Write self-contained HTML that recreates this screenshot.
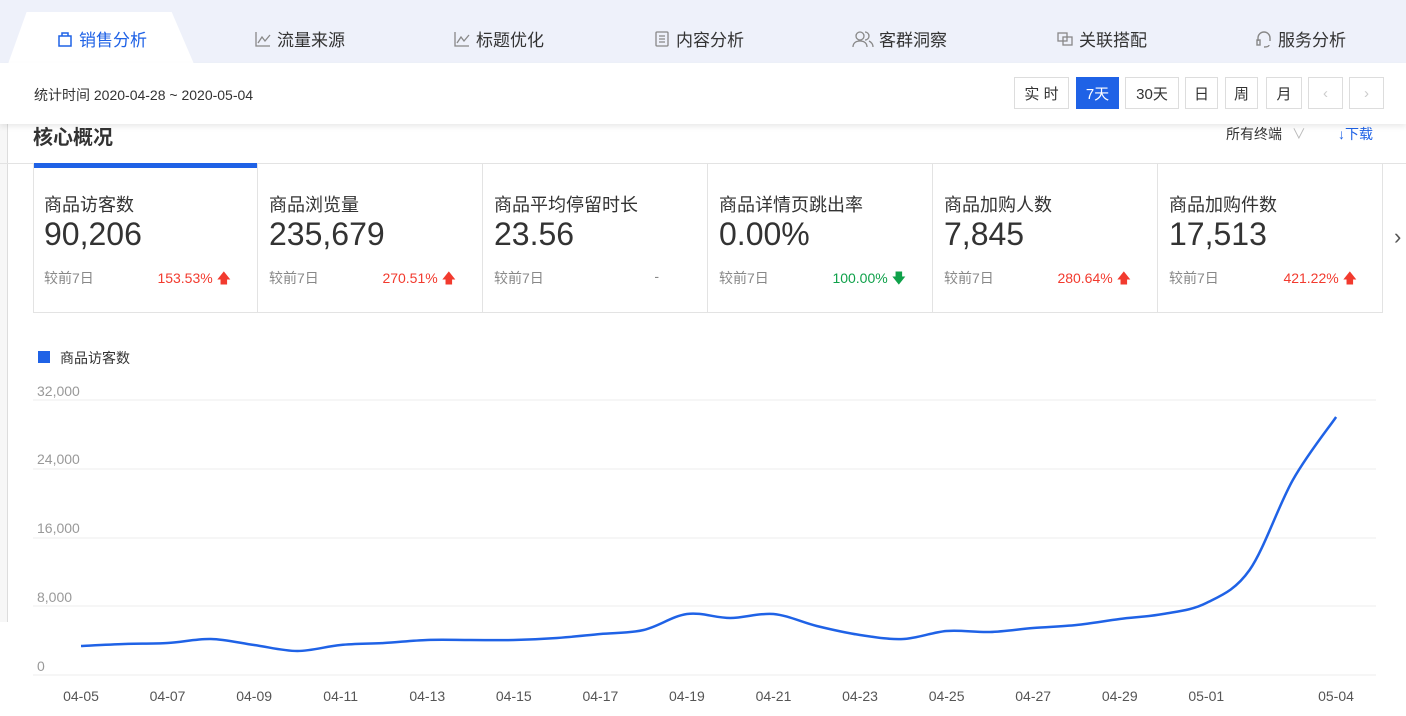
<!DOCTYPE html>
<html><head><meta charset="utf-8"><style>
*{margin:0;padding:0;box-sizing:border-box}
body{width:1406px;height:716px;overflow:hidden;background:#fff;font-family:"Liberation Sans","Noto Sans CJK SC",sans-serif;color:#333;position:relative}
.tabs{position:absolute;left:0;top:0;width:1406px;height:63px;background:#eef1fa}
.tab{position:absolute;top:26px;font-size:17px;color:#333;display:flex;align-items:center;gap:5px}
.tab svg{width:18px;height:18px}
.act{position:absolute;left:8px;top:12px;width:186px;height:52px;background:#fff;clip-path:polygon(10% 0,88% 0,100% 100%,0 100%)}
.hdr{position:absolute;left:0;top:63px;width:1406px;height:61px;background:#fff;box-shadow:0 3px 5px rgba(0,0,0,.08);z-index:2}
.btn{position:absolute;top:77px;height:32px;border:1px solid #ddd;font-size:15px;display:flex;align-items:center;justify-content:center;color:#333;background:#fff;z-index:3}
.card{position:absolute;top:163px;width:225px;height:150px;border-right:1px solid #e3e3e3}
.card .t{position:absolute;left:11px;top:28px;font-size:18px}
.card .v{position:absolute;left:11px;top:53px;font-size:32px;color:#333}
.card .c{position:absolute;left:11px;top:105px;font-size:14px;color:#888}
.card .p{position:absolute;right:26px;top:105px;font-size:14px;color:#f23a2e}
</style></head><body>
<div style="position:absolute;left:0;top:0;width:8px;height:622px;border-right:1px solid #ddd;background:#f7f7f7"></div>
<div class="tabs">
<div class="act"></div>
<div class="tab" style="left:56px;color:#1f62e6"><svg viewBox="0 0 18 18" fill="none" stroke="#1f62e6" stroke-width="1.5"><rect x="3" y="6" width="12" height="10"/><path d="M6 6V3h6v3"/></svg>销售分析</div>
<div class="tab" style="left:254px"><svg viewBox="0 0 18 18" fill="none" stroke="#888" stroke-width="1.3"><path d="M2 2v14h14M4 13l4-6 3 4 5-6"/></svg>流量来源</div>
<div class="tab" style="left:453px"><svg viewBox="0 0 18 18" fill="none" stroke="#888" stroke-width="1.3"><path d="M2 2v14h14M4 13l4-6 3 4 5-6"/></svg>标题优化</div>
<div class="tab" style="left:653px"><svg viewBox="0 0 18 18" fill="none" stroke="#888" stroke-width="1.3"><rect x="3" y="2" width="12" height="14" rx="1"/><path d="M6 6h6M6 9h6M6 12h6"/></svg>内容分析</div>
<div class="tab" style="left:852px"><svg viewBox="0 0 22 18" style="width:22px" fill="none" stroke="#888" stroke-width="1.3"><circle cx="8" cy="6" r="4"/><path d="M1 17c0-4 3-6 7-6s7 2 7 6M13 2a4 4 0 010 8M17 11c2 1 4 3 4 6"/></svg>客群洞察</div>
<div class="tab" style="left:1056px"><svg viewBox="0 0 18 18" fill="none" stroke="#888" stroke-width="1.3"><rect x="2" y="3" width="9" height="8"/><rect x="7" y="7" width="9" height="8"/></svg>关联搭配</div>
<div class="tab" style="left:1255px"><svg viewBox="0 0 18 18" fill="none" stroke="#888" stroke-width="1.4"><path d="M3 11V8a6 6 0 0112 0v3"/><rect x="2" y="10" width="3" height="5"/><path d="M14 15c0 2-3 2-5 2"/></svg>服务分析</div>
</div>
<div class="hdr"><div style="position:absolute;left:34px;top:22px;font-size:14px;color:#333">统计时间 2020-04-28 ~ 2020-05-04</div></div>
<div class="btn" style="left:1014px;width:55px">实 时</div>
<div class="btn" style="left:1076px;width:43px;background:#1f62e6;color:#fff;border-color:#1f62e6">7天</div>
<div class="btn" style="left:1125px;width:54px">30天</div>
<div class="btn" style="left:1185px;width:33px">日</div>
<div class="btn" style="left:1225px;width:33px">周</div>
<div class="btn" style="left:1266px;width:36px">月</div>
<div class="btn" style="left:1308px;width:35px;color:#ccc">‹</div>
<div class="btn" style="left:1349px;width:35px;color:#ccc">›</div>
<div style="position:absolute;left:33px;top:121px;font-size:20px;font-weight:bold;color:#333">核心概况</div>
<div style="position:absolute;left:1226px;top:124px;font-size:14px;color:#333">所有终端 <span style="color:#bbb;margin-left:6px">∨</span></div>
<div style="position:absolute;left:1338px;top:124px;font-size:14px;color:#1f62e6">↓下载</div>
<div style="position:absolute;left:0;top:163px;width:1406px;border-top:1px solid #e3e3e3"></div>
<div style="position:absolute;left:33px;top:163px;width:1350px;height:150px;border:1px solid #e3e3e3;border-top:none"></div>
<div style="position:absolute;left:34px;top:163px;width:224px;height:5px;background:#1f62e6"></div>
<div class="card" style="left:33px"><div class="t">商品访客数</div><div class="v">90,206</div><div class="c">较前7日</div><div class="p">153.53% 🡅</div></div>
<div class="card" style="left:258px"><div class="t">商品浏览量</div><div class="v">235,679</div><div class="c">较前7日</div><div class="p">270.51% 🡅</div></div>
<div class="card" style="left:483px"><div class="t">商品平均停留时长</div><div class="v">23.56</div><div class="c">较前7日</div><div class="p" style="color:#888;right:48px">-</div></div>
<div class="card" style="left:708px"><div class="t">商品详情页跳出率</div><div class="v">0.00%</div><div class="c">较前7日</div><div class="p" style="color:#0fa14a">100.00% 🡇</div></div>
<div class="card" style="left:933px"><div class="t">商品加购人数</div><div class="v">7,845</div><div class="c">较前7日</div><div class="p">280.64% 🡅</div></div>
<div class="card" style="left:1158px;border-right:none"><div class="t">商品加购件数</div><div class="v">17,513</div><div class="c">较前7日</div><div class="p">421.22% 🡅</div></div>
<div style="position:absolute;left:1394px;top:224px;font-size:22px;color:#555">›</div>
<div style="position:absolute;left:38px;top:351px;width:12px;height:12px;background:#1f62e6"></div>
<div style="position:absolute;left:60px;top:348px;font-size:14px;color:#333">商品访客数</div>
<svg width="1406" height="716" style="position:absolute;left:0;top:0" font-family="Liberation Sans" font-size="14" fill="#999">
<g stroke="#eee"><path d="M33 400H1376M33 469H1376M33 538H1376M33 606H1376M33 675H1376"/></g>
<text x="37" y="396">32,000</text><text x="37" y="464">24,000</text><text x="37" y="533">16,000</text><text x="37" y="602">8,000</text><text x="37" y="671">0</text>
<g fill="#555" text-anchor="middle" id="xl"></g>
<path id="ln" fill="none" stroke="#1f62e6" stroke-width="2.5"/>
</svg>
<script>
var ys=[646,644,643,639,645,651,645,643,640,640,640,638,634,630,614,618,614,626,635,639,631,632,628,625,619,614,603,570,480,417];
var p=ys.map(function(y,i){return[81+43.28*i,y]});
var d="M"+p[0][0]+" "+p[0][1];
for(var i=0;i<p.length-1;i++){var a=p[i-1]||p[i],b=p[i],c=p[i+1],e=p[i+2]||c;
d+=" C"+(b[0]+(c[0]-a[0])/6)+" "+(b[1]+(c[1]-a[1])/6)+" "+(c[0]-(e[0]-b[0])/6)+" "+(c[1]-(e[1]-b[1])/6)+" "+c[0]+" "+c[1];}
document.getElementById("ln").setAttribute("d",d);
var L=["04-05","04-07","04-09","04-11","04-13","04-15","04-17","04-19","04-21","04-23","04-25","04-27","04-29","05-01"],s="";
L.forEach(function(t,i){s+='<text x="'+(81+86.56*i)+'" y="701">'+t+'</text>'});
s+='<text x="1336" y="701">05-04</text>';
document.getElementById("xl").innerHTML=s;
</script>
</body></html>
